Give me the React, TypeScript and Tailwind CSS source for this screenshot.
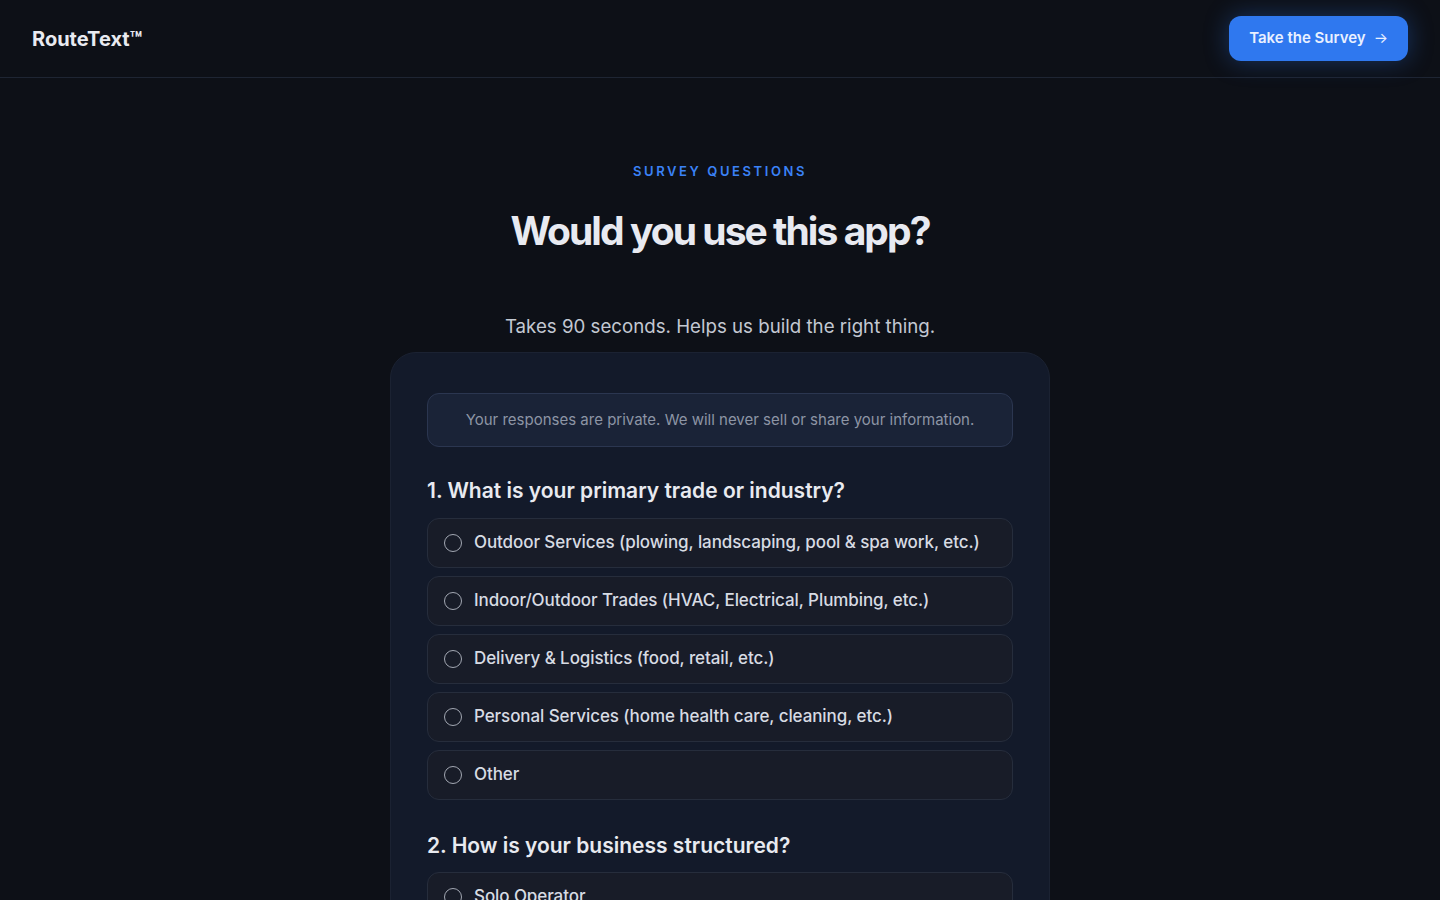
import { useState } from 'react'

const questions = [
  {
    id: 'trade',
    title: '1. What is your primary trade or industry?',
    options: [
      'Outdoor Services (plowing, landscaping, pool & spa work, etc.)',
      'Indoor/Outdoor Trades (HVAC, Electrical, Plumbing, etc.)',
      'Delivery & Logistics (food, retail, etc.)',
      'Personal Services (home health care, cleaning, etc.)',
      'Other',
    ],
  },
  {
    id: 'structure',
    title: '2. How is your business structured?',
    options: ['Solo Operator', 'Small Team (2-10)', 'Larger Company (10+)'],
  },
]

function Option({ label, checked, onSelect }: { label: string; checked: boolean; onSelect: () => void }) {
  return (
    <button
      type="button"
      onClick={onSelect}
      className="flex h-[50px] w-full items-center gap-3 rounded-xl border border-[#262d3c] bg-[#181c28] px-4 text-left"
    >
      <span className="flex h-[18px] w-[18px] shrink-0 items-center justify-center rounded-full border-[1.5px] border-[#a3a8b3]">
        {checked && <span className="h-2 w-2 rounded-full bg-[#3b82f6]" />}
      </span>
      <span className="text-[17px] font-medium tracking-[-0.005em] text-[#d7dbe3]">{label}</span>
    </button>
  )
}

export default function App() {
  const [answers, setAnswers] = useState<Record<string, string>>({})

  return (
    <div
      className="min-h-screen bg-[#0d1017] text-white"
      style={{ fontFamily: 'Inter, "Noto Sans", sans-serif' }}
    >
      <header className="flex h-[78px] items-center justify-between border-b border-[#1e2533] px-8">
        <span className="text-[20px] font-bold text-[#e8eaf0]">RouteText™</span>
        <button
          type="button"
          className="flex h-[45px] items-center gap-2 rounded-xl bg-[#2f78ef] px-5 text-[15px] font-semibold text-[#e9f0ff] shadow-[0_0_24px_rgba(47,120,239,0.35)]"
        >
          Take the Survey <span className="text-[15px] font-normal">→</span>
        </button>
      </header>

      <main className="flex flex-col items-center pt-[84px]">
        <p className="text-[13px] font-semibold tracking-[0.2em] text-[#3b82f6]">SURVEY QUESTIONS</p>
        <h1 className="mt-[20px] text-[39px] font-bold tracking-[-0.05em] text-[#e8eaf1]">Would you use this app?</h1>
        <p className="mt-[53px] text-[18.7px] text-[#c3c8d2]">Takes 90 seconds. Helps us build the right thing.</p>

        <div className="mt-[11px] w-[660px] rounded-[26px] border border-[#1b2232] bg-[#131a2a] px-9 pt-10 pb-10">
          <div className="flex h-[54px] items-center justify-center rounded-xl border border-[#2b3650] bg-[#1a2337] text-[15px] text-[#8d95a5]">
            Your responses are private. We will never sell or share your information.
          </div>

          {questions.map((q, i) => (
            <section key={q.id} className={i === 0 ? 'mt-[28px]' : 'mt-[30px]'}>
              <h2 className="text-[21px] font-semibold text-[#e8eaf0]">{q.title}</h2>
              <div className="mt-[11px] flex flex-col gap-2">
                {q.options.map((o) => (
                  <Option
                    key={o}
                    label={o}
                    checked={answers[q.id] === o}
                    onSelect={() => setAnswers({ ...answers, [q.id]: o })}
                  />
                ))}
              </div>
            </section>
          ))}
        </div>
      </main>
    </div>
  )
}
